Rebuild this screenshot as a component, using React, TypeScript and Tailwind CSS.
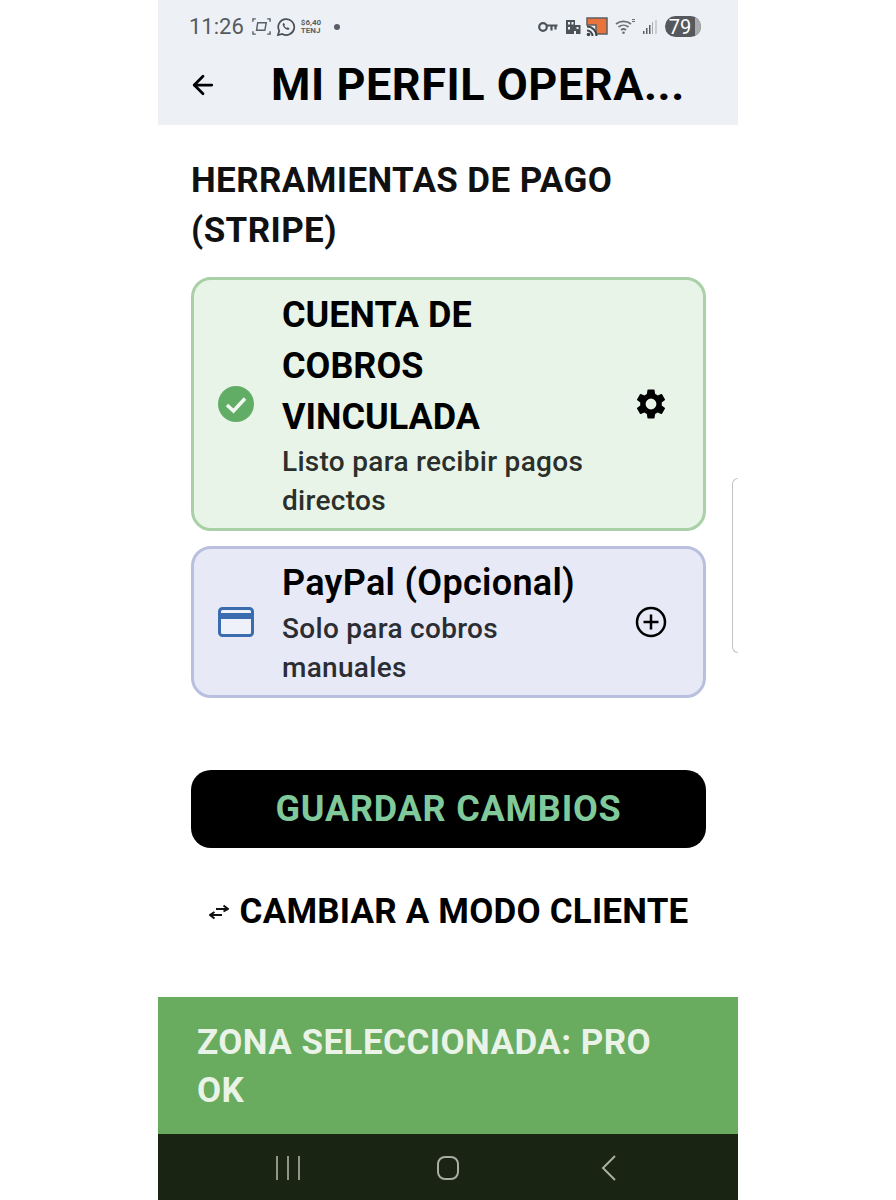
import { ArrowLeft } from 'lucide-react';

function StatusBar() {
  return (
    <div className="flex h-[50px] items-center justify-between pl-[31px] pr-[37px] pt-[3px]">
      <div className="flex items-center">
        <span className="text-[22px] leading-none text-[#555a60]">11:26</span>
        <svg className="ml-[8px]" width="19" height="19" viewBox="0 0 20 20" fill="none" stroke="#5a5f65" strokeWidth="1.5">
          <path d="M1 5V2h3M16 2h3v3M1 15v3h3M16 18h3v-3" />
          <path d="M6 6h9l-1.500 8H4.800z" />
        </svg>
        <svg className="ml-[5px]" width="20" height="20" viewBox="0 0 20 20" fill="none" stroke="#4a4f55" strokeWidth="1.700">
          <path d="M2 18l1.200-4.200A8 8 0 1 1 6.300 17z" />
          <path d="M7 6.500c-.8 1 0 3 1.500 4.500s3.500 2.300 4.500 1.500l.6-1-2-1.200-.9.700c-1-.4-2-1.400-2.400-2.400l.7-.9L7.800 5.800z" fill="#4a4f55" stroke="none" />
        </svg>
        <div className="ml-[5px] flex w-[21px] flex-col text-[8px] font-bold leading-[8px] text-[#5a5f65]">
          <span>$6,40</span>
          <span>TENJ</span>
        </div>
        <div className="ml-[12px] h-[6px] w-[6px] rounded-full bg-[#5a5f65]" />
      </div>
      <div className="flex items-center">
        <svg width="20" height="12" viewBox="0 0 20 12" fill="none" stroke="#4d5258" strokeWidth="2.200">
          <circle cx="5" cy="6" r="3.800" />
          <path d="M8.800 4.500H19.500M13.500 4.500v5M17.500 4.500v4" />
        </svg>
        <svg className="ml-[7px]" width="16" height="16" viewBox="0 0 16 16" fill="#4d5258">
          <path d="M1 1h9v5h5.500v9H11v-3H9v3H1z" />
          <rect x="3" y="3" width="2" height="2.500" fill="#eef2f8" />
          <rect x="6.500" y="3" width="2" height="2.500" fill="#eef2f8" />
          <rect x="3" y="8" width="2" height="2.500" fill="#eef2f8" />
          <rect x="11.500" y="8" width="2" height="2" fill="#eef2f8" />
        </svg>
        <svg className="ml-[5px]" width="22" height="20" viewBox="0 0 22 20" fill="none">
          <path d="M1 1h20v16H10V8H1z" fill="#e8743b" stroke="#5b5f63" strokeWidth="1.500" />
          <path d="M1 9.500a9.500 9.500 0 0 1 9.500 9.500M1 13.500a5.500 5.500 0 0 1 5.500 5.500" stroke="#3f4449" strokeWidth="2" />
          <circle cx="2.500" cy="17.500" r="1.800" fill="#3f4449" />
        </svg>
        <svg className="ml-[7px]" width="21" height="17" viewBox="0 0 21 17" fill="none" stroke="#6a6f74" strokeWidth="1.700">
          <path d="M1 6a12 12 0 0 1 15 0M3.500 9a8 8 0 0 1 10 0M6 12a4 4 0 0 1 5 0" />
          <circle cx="8.500" cy="14.800" r="1.300" fill="#6a6f74" stroke="none" />
          <path d="M17 1.500h3M17 3.500h3" strokeWidth="1.100" />
        </svg>
        <svg className="ml-[6px]" width="16" height="16" viewBox="0 0 16 16">
          <rect x="1" y="12" width="1.500" height="3" fill="#5b5f63" />
          <rect x="4" y="9" width="1.500" height="6" fill="#5b5f63" />
          <rect x="7" y="6" width="1.500" height="9" fill="#5b5f63" />
          <rect x="10" y="3" width="1" height="12" fill="#a9adb2" />
          <rect x="13.500" y="1" width="1" height="14" fill="#a9adb2" />
        </svg>
        <div className="ml-[7px] flex h-[21px] w-[36px] items-center overflow-hidden rounded-full bg-[#55585c]">
          <span className="w-[30px] text-center text-[20px] leading-none text-white">79</span>
          <div className="h-full flex-1 bg-[#a9aaab]" />
        </div>
      </div>
    </div>
  );
}

function GearIcon() {
  return (
    <svg width="36" height="36" viewBox="0 0 24 24" fill="#000">
      <path d="M19.140 12.940c.04-.3.060-.61.060-.94s-.02-.64-.07-.94l2.030-1.580a.49.49 0 0 0 .12-.61l-1.920-3.320a.49.49 0 0 0-.59-.22l-2.390.96a7 7 0 0 0-1.620-.94l-.36-2.540a.48.48 0 0 0-.48-.41h-3.840a.48.48 0 0 0-.47.41l-.36 2.540c-.59.24-1.130.57-1.620.94l-2.390-.96a.49.49 0 0 0-.59.22L2.740 8.870a.48.48 0 0 0 .12.61l2.030 1.580c-.05.3-.09.63-.09.94s.02.64.07.94l-2.030 1.580a.49.49 0 0 0-.12.61l1.920 3.320c.12.22.37.29.59.22l2.390-.96c.5.380 1.030.7 1.620.94l.36 2.540c.05.24.24.41.48.41h3.840c.24 0 .44-.17.47-.41l.36-2.540c.59-.24 1.130-.56 1.620-.94l2.390.96c.22.08.47 0 .59-.22l1.920-3.320a.47.47 0 0 0-.12-.61zM12 15.600A3.600 3.600 0 1 1 12 8.400a3.600 3.600 0 0 1 0 7.200z" />
    </svg>
  );
}

export default function App() {
  return (
    <div className="flex min-h-[1200px] justify-center bg-white font-['Roboto',sans-serif]">
      <div className="relative flex h-[1200px] w-[580px] flex-col bg-white">
        <header className="h-[125px] bg-[#edf1f6]">
          <StatusBar />
          <div className="flex h-[70px] items-center pl-[30px]">
            <ArrowLeft size={30} strokeWidth={2.200} className="text-black" />
            <h1 className="-mt-[2px] ml-[53px] text-[45px] font-bold leading-none tracking-[0.55px] text-black">MI PERFIL OPERA...</h1>
          </div>
        </header>

        <main className="flex flex-1 flex-col pl-[33px] pr-[32px]">
          <h2 className="mt-[31px] text-[35px] font-bold leading-[50px] tracking-[0.4px] text-[#111]">
            HERRAMIENTAS DE PAGO<br />(STRIPE)
          </h2>

          <div className="mt-[21px] flex h-[254px] items-center rounded-[20px] border-[3px] border-[#a9d0a6] bg-[#e8f4e8] pl-[24px] pr-[34px]">
            <svg width="36" height="36" viewBox="0 0 36 36" className="shrink-0">
              <circle cx="18" cy="18" r="18" fill="#62ad66" />
              <path d="M9 19l6.500 6L27 12.500" fill="none" stroke="#f2f8f2" strokeWidth="3.500" />
            </svg>
            <div className="ml-[28px] flex-1 pt-[1px]">
              <p className="text-[36px] font-bold leading-[51px] text-black">CUENTA DE<br />COBROS<br />VINCULADA</p>
              <p className="-mt-[1px] text-[28px] font-medium leading-[39px] tracking-[0.3px] text-[#2b2f2b]">Listo para recibir pagos<br />directos</p>
            </div>
            <GearIcon />
          </div>

          <div className="mt-[15px] flex h-[152px] items-center rounded-[20px] border-[3px] border-[#b9c0de] bg-[#e7e9f6] pl-[24px] pr-[36px]">
            <svg width="36" height="30" viewBox="0 0 36 30" className="shrink-0">
              <rect x="1.500" y="1.500" width="33" height="27" rx="3" fill="#eef0fa" stroke="#3b6cb0" strokeWidth="3" />
              <rect x="2" y="6" width="32" height="6" fill="#3b6cb0" />
            </svg>
            <div className="ml-[28px] flex-1 pt-[4px]">
              <p className="text-[36px] font-semibold leading-[44px] tracking-[0.3px] text-black">PayPal (Opcional)</p>
              <p className="mt-[4px] text-[28px] font-medium leading-[39px] tracking-[0.3px] text-[#2b2d33]">Solo para cobros<br />manuales</p>
            </div>
            <svg width="32" height="32" viewBox="0 0 32 32" fill="none" stroke="#000" strokeWidth="2.500">
              <circle cx="16" cy="16" r="14" />
              <path d="M16 8.500v15M8.500 16h15" />
            </svg>
          </div>

          <button className="mt-[72px] h-[78px] rounded-[20px] bg-black text-[36px] font-bold tracking-[0.8px] text-[#7fc99b]">
            GUARDAR CAMBIOS
          </button>

          <div className="mt-[39px] flex items-center justify-center">
            <svg width="20" height="16" viewBox="0 0 20 16" fill="none" stroke="#111" strokeWidth="2" className="mr-[11px]">
              <path d="M7 5h11M14.500 1.500L19 5l-4.500 2.500" />
              <path d="M13 11H2M5.500 8L1 11l4.500 3.500" />
            </svg>
            <span className="text-[35px] font-bold leading-[50px] tracking-[0.2px] text-black">CAMBIAR A MODO CLIENTE</span>
          </div>
        </main>

        <div className="h-[137px] bg-[#69ab5f] pl-[39px] pt-[22px]">
          <p className="text-[35px] font-bold leading-[48px] tracking-[0.45px] text-[#e9f3e7]">ZONA SELECCIONADA: PRO<br />OK</p>
        </div>

        <nav className="flex h-[66px] items-center bg-[#1a2412] pt-[2px]">
          <div className="ml-[118px] flex h-[24px] w-[24px] justify-between">
            <span className="h-full w-[2px] bg-[#8f958b]" />
            <span className="h-full w-[2px] bg-[#8f958b]" />
            <span className="h-full w-[2px] bg-[#8f958b]" />
          </div>
          <div className="ml-[137px] h-[24px] w-[22px] rounded-[8px] border-2 border-[#a9ada5]" />
          <svg className="ml-[142px]" width="16" height="26" viewBox="0 0 16 26" fill="none" stroke="#a9ada5" strokeWidth="2">
            <path d="M14 1L2 13l12 12" />
          </svg>
        </nav>

        <div className="absolute right-0 top-[478px] h-[175px] w-[6px] rounded-l-[6px] border-y border-l border-[#c4c4c4] bg-white" />
      </div>
    </div>
  );
}
